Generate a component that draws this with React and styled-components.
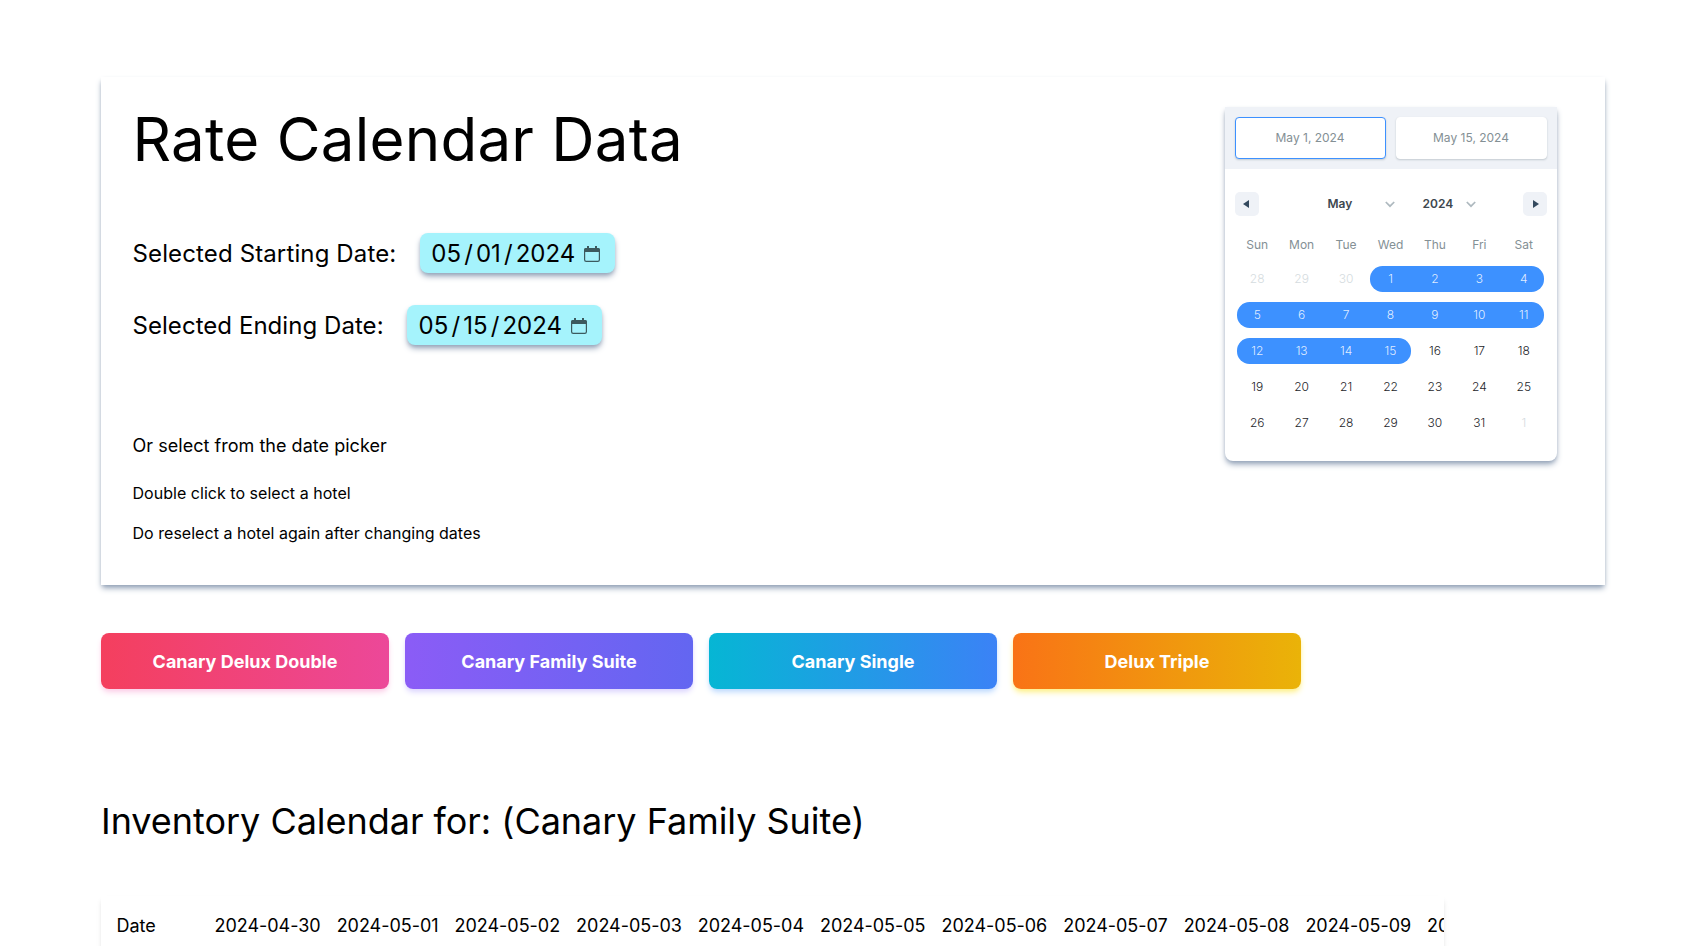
import React from "react";
import styled, { createGlobalStyle } from "styled-components";

const Global = createGlobalStyle`
  *, *::before, *::after { box-sizing: border-box; }
  body {
    margin: 0;
    background: #fff;
    color: #000;
    font-family: Inter, sans-serif;
    font-size: 16px;
    line-height: 24px;
  }
  h1, h2, p { margin: 0; font-weight: 400; }
  button { font: inherit; }
`;

const slateShadow = "0 4px 6px -1px #94a3b8, 0 2px 4px -2px #94a3b8";

const Page = styled.main`
  height: 946px;
  overflow: hidden;
  padding: 77px 98px 0 101px;
`;

const Card = styled.section`
  height: 508px;
  padding: 30px 48px 0 31.5px;
  display: flex;
  justify-content: space-between;
  align-items: flex-start;
  background: #fff;
  box-shadow: ${slateShadow};
`;

const Intro = styled.div`
  padding-top: 2px;
  display: flex;
  flex-direction: column;
`;

const Title = styled.h1`
  font-size: 60px;
  line-height: 60px;
  letter-spacing: 0.25px;
  margin-bottom: 64px;
`;

const DateRow = styled.div`
  display: flex;
  align-items: center;
  height: 40px;
  margin-bottom: 32px;
  font-size: 24px;
  line-height: 32px;
`;

const DateLabel = styled.span`
  padding-top: 2px;
  letter-spacing: ${(p) => p.$tracking}px;
`;

const DateField = styled.div`
  margin-left: 23.5px;
  padding: 1px 15px 0 11.5px;
  width: 195px;
  height: 40px;
  display: flex;
  align-items: center;
  border-radius: 8px;
  background: #a5f3fc;
  box-shadow: ${slateShadow};

  svg { margin: 0 0 0 auto; }
`;

const Slash = styled.span`
  margin: 0 3.1px;
`;

const Hint = styled.p`
  font-size: ${(p) => (p.$large ? 18 : 16)}px;
  line-height: ${(p) => (p.$large ? 28 : 24)}px;
  margin-top: ${(p) => p.$top}px;
  letter-spacing: 0.03px;
`;

const Picker = styled.div`
  width: 332px;
  height: 354px;
  background: #fff;
  border-radius: 0 0 8px 8px;
  font-size: 12px;
  line-height: 16px;
  color: #849095;
  box-shadow: ${slateShadow};
`;

const RangeHeader = styled.div`
  display: flex;
  gap: 10px;
  padding: 10px;
  background: #eff2f7;
`;

const RangeField = styled.div`
  flex: 1;
  height: 42px;
  padding-right: 1px;
  display: grid;
  place-items: center;
  background: #fff;
  border-radius: 4px;
  border: 1px solid ${(p) => (p.$active ? "#3d91ff" : "#fff")};
  box-shadow: 0 1px 2px rgba(35, 57, 66, 0.21);
`;

const MonthBar = styled.div`
  height: 60px;
  padding: 10px 10px 0;
  display: flex;
  align-items: center;
`;

const Step = styled.button`
  width: 24px;
  height: 24px;
  padding: 0;
  border: 0;
  border-radius: 5px;
  background: #eff2f7;
  display: grid;
  place-items: center;
`;

const Selects = styled.div`
  flex: 1;
  display: flex;
  gap: 28px;
  padding-left: 68.5px;
`;

const Select = styled.div`
  width: ${(p) => p.$width}px;
  display: flex;
  align-items: center;
  justify-content: space-between;
  font-weight: 600;
  color: #3e484f;
`;

const Week = styled.div`
  display: grid;
  grid-template-columns: repeat(7, 1fr);
  margin: 0 11px 0 10px;
`;

const Weekday = styled.span`
  line-height: 32px;
  text-align: center;
`;

const Day = styled.span`
  height: 26px;
  line-height: 26px;
  margin: 5px ${(p) => (p.$end ? 2 : 0)}px 5px ${(p) => (p.$start ? 2 : 0)}px;
  padding: 0 ${(p) => (p.$start ? 2 : 0)}px 0 ${(p) => (p.$end ? 2 : 0)}px;
  text-align: center;
  font-weight: 300;
  color: ${(p) => (p.$selected ? "rgba(255,255,255,.85)" : p.$muted ? "#d5dce0" : "#1d2429")};
  background: ${(p) => (p.$selected ? "#3d91ff" : "transparent")};
  border-radius: ${(p) => `${p.$start ? 12.5 : 0}px ${p.$end ? 12.5 : 0}px ${p.$end ? 12.5 : 0}px ${p.$start ? 12.5 : 0}px`};
`;

const Hotels = styled.nav`
  display: flex;
  gap: 16px;
  margin-top: 48px;
`;

const HotelButton = styled.button`
  width: 288px;
  height: 56px;
  padding: 2px 0 0;
  border: 0;
  border-radius: 8px;
  color: #fff;
  font-size: 18px;
  line-height: 28px;
  font-weight: 700;
  background: linear-gradient(to right, ${(p) => p.$from}, ${(p) => p.$to});
  box-shadow: 0 4px 6px -1px ${(p) => p.$glow}, 0 2px 4px -2px ${(p) => p.$glow};
`;

const SectionTitle = styled.h2`
  margin-top: 112px;
  font-size: 36px;
  line-height: 40px;
  letter-spacing: -0.03px;
`;

const TableBox = styled.div`
  width: 1343px;
  height: 200px;
  margin-top: 55px;
  padding: 16px 16px 16px 15.5px;
  overflow: hidden;
  box-shadow: 0 4px 6px -1px rgba(0, 0, 0, 0.1), 0 2px 4px -2px rgba(0, 0, 0, 0.1);
`;

const TableRow = styled.div`
  display: flex;
  gap: 16px;
  font-size: 18px;
  line-height: 28px;
  letter-spacing: -0.03px;
  white-space: nowrap;
`;

const RowLabel = styled.span`
  flex: none;
  width: 82px;
`;

const DateCell = styled.span`
  flex: none;
`;

const Chevron = () => (
  <svg width="10" height="7" viewBox="0 0 10 7" fill="none">
    <path d="M.8 1 5 5.2 9.2 1" stroke="#aeb9bf" strokeWidth="1.7" />
  </svg>
);

const Arrow = ({ next }) => (
  <svg width="8" height="8" viewBox="0 0 8 8">
    <path d={next ? "M2 0 8 4 2 8Z" : "M6 0 0 4 6 8Z"} fill="#34495e" />
  </svg>
);

const CalendarIcon = () => (
  <svg width="16" height="16" viewBox="0 0 16 16">
    <rect x=".6" y="2.6" width="14.8" height="12.8" rx="1.6" fill="none" stroke="#3c5a5e" strokeWidth="1.2" />
    <path d="M0 6V4Q0 2 2 2H3V0H5V2H11V0H13V2H14Q16 2 16 4V6Z" fill="#3c5a5e" />
  </svg>
);

const DateValue = ({ value }) => {
  const [month, day, year] = value.split("/");
  return (
    <DateField>
      <span>{month}</span>
      <Slash>/</Slash>
      <span>{day}</span>
      <Slash>/</Slash>
      <span>{year}</span>
      <CalendarIcon />
    </DateField>
  );
};

const weekdays = ["Sun", "Mon", "Tue", "Wed", "Thu", "Fri", "Sat"];
const weeks = [0, 1, 2, 3, 4].map((w) =>
  weekdays.map((_, d) => {
    const n = w * 7 + d - 2;
    const selected = n >= 1 && n <= 15;
    return {
      label: n < 1 ? n + 30 : n > 31 ? n - 31 : n,
      muted: n < 1 || n > 31,
      selected,
      start: selected && (n === 1 || d === 0),
      end: selected && (n === 15 || d === 6),
    };
  })
);

const hotels = [
  { name: "Canary Delux Double", from: "#f43f5e", to: "#ec4899", glow: "#fbcfe8" },
  { name: "Canary Family Suite", from: "#8b5cf6", to: "#6366f1", glow: "#ddd6fe" },
  { name: "Canary Single", from: "#06b6d4", to: "#3b82f6", glow: "#bfdbfe" },
  { name: "Delux Triple", from: "#f97316", to: "#eab308", glow: "#fef08a" },
];

const dates = ["2024-04-30"].concat(
  Array.from({ length: 10 }, (_, i) => `2024-05-${String(i + 1).padStart(2, "0")}`)
);

export default function App() {
  return (
    <Page>
      <Global />
      <Card>
        <Intro>
          <Title>Rate Calendar Data</Title>
          <DateRow>
            <DateLabel $tracking={0.13}>Selected Starting Date:</DateLabel>
            <DateValue value="05/01/2024" />
          </DateRow>
          <DateRow>
            <DateLabel $tracking={0.05}>Selected Ending Date:</DateLabel>
            <DateValue value="05/15/2024" />
          </DateRow>
          <Hint $large $top={55}>Or select from the date picker</Hint>
          <Hint $top={21}>Double click to select a hotel</Hint>
          <Hint $top={16}>Do reselect a hotel again after changing dates</Hint>
        </Intro>
        <Picker>
          <RangeHeader>
            <RangeField $active>May 1, 2024</RangeField>
            <RangeField>May 15, 2024</RangeField>
          </RangeHeader>
          <MonthBar>
            <Step aria-label="Previous month"><Arrow /></Step>
            <Selects>
              <Select $width={67}>May <Chevron /></Select>
              <Select $width={53}>2024 <Chevron /></Select>
            </Selects>
            <Step aria-label="Next month"><Arrow next /></Step>
          </MonthBar>
          <Week>
            {weekdays.map((d) => <Weekday key={d}>{d}</Weekday>)}
          </Week>
          {weeks.map((week, i) => (
            <Week key={i}>
              {week.map((d, j) => (
                <Day key={j} $selected={d.selected} $muted={d.muted} $start={d.start} $end={d.end}>
                  {d.label}
                </Day>
              ))}
            </Week>
          ))}
        </Picker>
      </Card>
      <Hotels>
        {hotels.map((h) => (
          <HotelButton key={h.name} $from={h.from} $to={h.to} $glow={h.glow}>{h.name}</HotelButton>
        ))}
      </Hotels>
      <SectionTitle>Inventory Calendar for: (Canary Family Suite)</SectionTitle>
      <TableBox>
        <TableRow>
          <RowLabel>Date</RowLabel>
          {dates.map((d) => <DateCell key={d}>{d}</DateCell>)}
        </TableRow>
      </TableBox>
    </Page>
  );
}
